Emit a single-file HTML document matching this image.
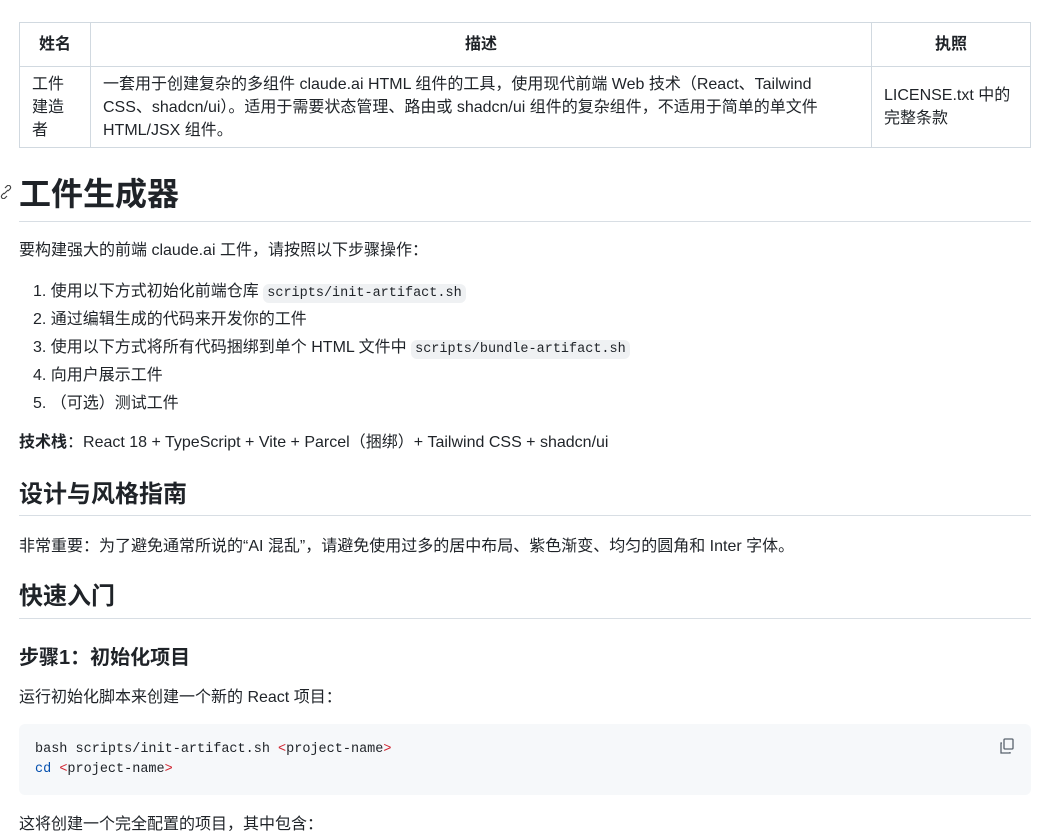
<!DOCTYPE html>
<html><head><meta charset="utf-8"><style>
*{margin:0;padding:0;box-sizing:border-box}
body{width:1062px;height:834px;overflow:hidden;background:#fff;color:#1f2328;font-family:"Liberation Sans","Noto Sans CJK SC",sans-serif;font-size:16px;position:relative}
.a{position:absolute;left:19px;white-space:nowrap;line-height:24px}
code{font-family:"Liberation Mono",monospace;font-size:13.5px;background:#eff1f3;border-radius:6px;padding:2px 4px}
.hr{position:absolute;left:19px;width:1012px;height:1px;background:#d8dee4}
table{position:absolute;left:19px;top:22px;width:1012px;border-collapse:collapse}
td,th{border:1px solid #d1d9e0;padding:0 12px;line-height:23px;vertical-align:middle;text-align:left}
th{font-weight:bold;text-align:center;height:44px}
td{height:81px}
</style></head><body>
<table><tr><th style="width:71px">姓名</th><th style="width:781px">描述</th><th>执照</th></tr>
<tr><td>工件<br>建造<br>者</td><td>一套用于创建复杂的多组件 claude.ai HTML 组件的工具，使用现代前端 Web 技术（React、Tailwind CSS、shadcn/ui）。适用于需要状态管理、路由或 shadcn/ui 组件的复杂组件，不适用于简单的单文件 HTML/JSX 组件。</td><td>LICENSE.txt 中的完整条款</td></tr></table>
<svg style="position:absolute;left:0;top:185px" width="12" height="14" viewBox="0 0 12 14"><path d="M5 3l2-2a2 2 0 013 3l-2 2M7 11l-2 2a2 2 0 01-3-3l2-2M4 9l4-4" fill="none" stroke="#444" stroke-width="1.2"/></svg>
<div class="a" style="top:174px;font-size:32px;font-weight:bold;line-height:40px">工件生成器</div>
<div class="hr" style="top:221px"></div>
<div class="a" style="top:239px">要构建强大的前端 claude.ai 工件，请按照以下步骤操作：</div>
<div class="a" style="top:280px;left:33px">1. 使用以下方式初始化前端仓库 <code>scripts/init-artifact.sh</code></div>
<div class="a" style="top:308px;left:33px">2. 通过编辑生成的代码来开发你的工件</div>
<div class="a" style="top:336px;left:33px">3. 使用以下方式将所有代码捆绑到单个 HTML 文件中 <code>scripts/bundle-artifact.sh</code></div>
<div class="a" style="top:364px;left:33px">4. 向用户展示工件</div>
<div class="a" style="top:392px;left:33px">5. （可选）测试工件</div>
<div class="a" style="top:431px"><b>技术栈</b>：React 18 + TypeScript + Vite + Parcel（捆绑）+ Tailwind CSS + shadcn/ui</div>
<div class="a" style="top:480px;font-size:24px;font-weight:bold;line-height:30px">设计与风格指南</div>
<div class="hr" style="top:515px"></div>
<div class="a" style="top:535px">非常重要：为了避免通常所说的“AI 混乱”，请避免使用过多的居中布局、紫色渐变、均匀的圆角和 Inter 字体。</div>
<div class="a" style="top:582px;font-size:24px;font-weight:bold;line-height:30px">快速入门</div>
<div class="hr" style="top:618px"></div>
<div class="a" style="top:645px;font-size:20px;font-weight:bold;line-height:26px">步骤1：初始化项目</div>
<div class="a" style="top:686px">运行初始化脚本来创建一个新的 React 项目：</div>
<div style="position:absolute;left:19px;top:724px;width:1012px;height:71px;background:#f6f8fa;border-radius:6px"></div>
<div class="a" style="top:740px;left:35px;font-family:'Liberation Mono',monospace;font-size:13.5px;line-height:20px">bash scripts/init-artifact.sh <span style="color:#cf222e">&lt;</span>project-name<span style="color:#cf222e">&gt;</span><br><span style="color:#0550ae">cd</span> <span style="color:#cf222e">&lt;</span>project-name<span style="color:#cf222e">&gt;</span></div>
<svg style="position:absolute;left:999px;top:738px" width="16" height="16" viewBox="0 0 16 16"><rect x="5" y="1" width="9" height="10" rx="1" fill="none" stroke="#59636e" stroke-width="1.3"/><path d="M3 5H2v10h9v-1" fill="none" stroke="#59636e" stroke-width="1.3"/></svg>
<div class="a" style="top:813px">这将创建一个完全配置的项目，其中包含：</div>
</body></html>
